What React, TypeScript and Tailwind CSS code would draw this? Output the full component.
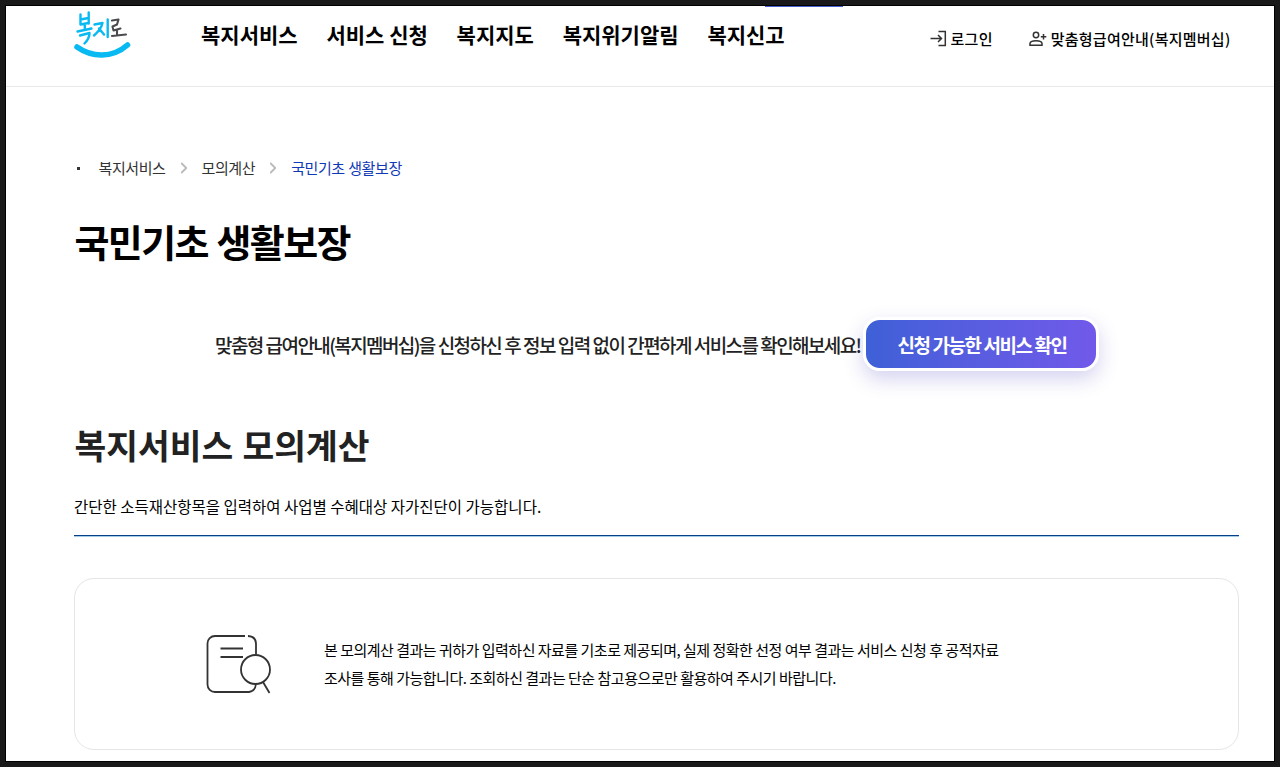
import React from 'react';
import { ChevronRight } from 'lucide-react';

const menus = ['복지서비스', '서비스 신청', '복지지도', '복지위기알림', '복지신고'];

const Logo: React.FC = () => (
  <svg width="58" height="50" viewBox="0 0 58 50" fill="none" strokeLinecap="round" strokeLinejoin="round">
    <g stroke="#08b9f2" strokeWidth="2.4">
      <path d="M6.500 4.500V14.500M14.700 2.500V13.500M6.500 9.500L14.500 8M6.500 14.500L14.500 13M10.800 14V19M3.500 21.500L17.500 18.500M6 25.500L15.500 23C15.500 27 13.500 30.500 10.500 33.500" />
      <path d="M20.500 14.500L28.500 13C27.500 17.500 24.500 21.500 20 25.500M25 18.500L30 24.500M33.700 9.500V27" />
    </g>
    <path d="M38 10.500L44.500 9.500L43 14.500L38.500 16.500L39.500 20.500L46.500 18.500M43 20.500V24.500M38 26L52 24.500" stroke="#4a4a4f" strokeWidth="2.1" />
    <path d="M3 37C18 47.500 38 48.500 53.500 35" stroke="#08b9f2" strokeWidth="5.600" />
  </svg>
);

const LoginIcon: React.FC = () => (
  <svg width="17" height="17" viewBox="0 0 17 17" fill="none" stroke="#333" strokeWidth="1.5">
    <path d="M8.500 1.500H15.300V15.500H8.500M0.500 8.500H11.500M8 5L11.500 8.500L8 12" />
  </svg>
);

const MemberIcon: React.FC = () => (
  <svg width="18" height="16" viewBox="0 0 18 16" fill="none" stroke="#333" strokeWidth="1.5">
    <circle cx="7" cy="4" r="2.700" />
    <path d="M1 14.300V12.500C1 10.500 4 9.700 7 9.700S13 10.500 13 12.500V14.300ZM14.500 3V8.500M11.800 5.700H17.300" />
  </svg>
);

const DocumentSearchIcon: React.FC = () => (
  <svg width="66" height="60" viewBox="0 0 66 60" fill="none" stroke="#333" strokeWidth="1.8">
    <path d="M39 2H9A7.500 7.500 0 0 0 1.500 9.500V50.500A7.500 7.500 0 0 0 9 58H43Q49.500 57 50 49.500M42 2Q50 2.500 50 10V20M14.500 14.500H37M14.500 23H37M57 48L63.500 59" />
    <circle cx="49.500" cy="35.500" r="14.500" />
  </svg>
);

const App: React.FC = () => {
  return (
    <div className="h-[767px] w-[1280px] overflow-hidden border-[5px] border-[#191919] bg-white font-['Noto_Sans_CJK_KR',sans-serif] text-black">
      <div className="h-full border border-black">
        <header className="relative flex h-[81px] items-start border-b border-[#e8e8e8] pl-[68px]">
          <div className="absolute left-[759px] top-0 h-px w-[78px] bg-[#4560cd]" />
          <a className="mt-[4px] block w-[127px]"><Logo /></a>
          <nav className="mt-[13px] flex gap-[28.8px] whitespace-nowrap text-[21px] font-bold leading-[30px]">
            {menus.map((menu) => (
              <a key={menu}>{menu}</a>
            ))}
          </nav>
          <div className="ml-auto mr-[43.5px] mt-[20px] flex whitespace-nowrap text-[15px] font-medium leading-6 tracking-[0.25px]">
            <a className="mr-[36px] flex items-center gap-1"><LoginIcon />로그인</a>
            <a className="flex items-center gap-1"><MemberIcon /><span className="pt-px">맞춤형급여안내(복지멤버십)</span></a>
          </div>
        </header>

        <main className="pl-[68px] pr-[35px]">
          {/* Breadcrumb */}
          <div className="mt-[69px] flex h-6 items-center text-[15px] tracking-[-0.4px] text-[#333]">
            <span className="ml-[2.5px] mr-[19px] h-[3px] w-[3px] bg-[#333]" />
            <span>복지서비스</span>
            <ChevronRight className="mx-[9px] text-[#bbb]" size={18} strokeWidth={2.4} />
            <span>모의계산</span>
            <ChevronRight className="mx-[9px] text-[#bbb]" size={18} strokeWidth={2.4} />
            <span className="text-[#0f39b5] [word-spacing:0.5px]">국민기초 생활보장</span>
          </div>

          <h1 className="ml-[0.5px] mt-[33px] text-[38px] font-bold leading-[56px] tracking-[-1.6px] [word-spacing:1.5px]">국민기초 생활보장</h1>

          <div className="mt-[48px] flex h-[54px] items-center whitespace-nowrap pl-[141px]">
            <p className="w-[648px] pt-[3px] text-[19px] font-medium tracking-[-1.6px] text-[#222] [word-spacing:0.3px]">
              맞춤형 급여안내(복지멤버십)을 신청하신 후 정보 입력 없이 간편하게 서비스를 확인해보세요!
            </p>
            <button className="h-[54px] w-[236px] rounded-[17px] border-[3px] border-white bg-linear-to-r from-[#3d60d7] to-[#7159ea] bg-origin-border pl-[2px] pt-[2px] text-[19px] font-bold tracking-[-1.45px] text-white shadow-[0_8px_20px_rgba(60,50,180,0.22)]">
              신청 가능한 서비스 확인
            </button>
          </div>

          <h2 className="ml-[0.5px] mt-[47px] text-[34.5px] font-bold leading-[52px] text-[#222] [word-spacing:1.5px]">복지서비스 모의계산</h2>
          <p className="mt-[24px] text-[15.5px] leading-6">
            간단한 소득재산항목을 입력하여 사업별 수혜대상 자가진단이 가능합니다.
          </p>
          <div className="mt-[17px] h-[2px] border-b border-[#a4cbe8] bg-[#064089]" />

          <section className="mt-[41px] flex h-[172px] items-center rounded-[20px] border border-[#e5e5e5] pl-[131px]">
            <DocumentSearchIcon />
            <p className="ml-[52px] whitespace-nowrap text-[15px] leading-[28px] tracking-[-0.5px]">
              본 모의계산 결과는 귀하가 입력하신 자료를 기초로 제공되며, 실제 정확한 선정 여부 결과는 서비스 신청 후 공적자료
              <br />
              조사를 통해 가능합니다. 조회하신 결과는 단순 참고용으로만 활용하여 주시기 바랍니다.
            </p>
          </section>
        </main>
      </div>
    </div>
  );
};

export default App;
